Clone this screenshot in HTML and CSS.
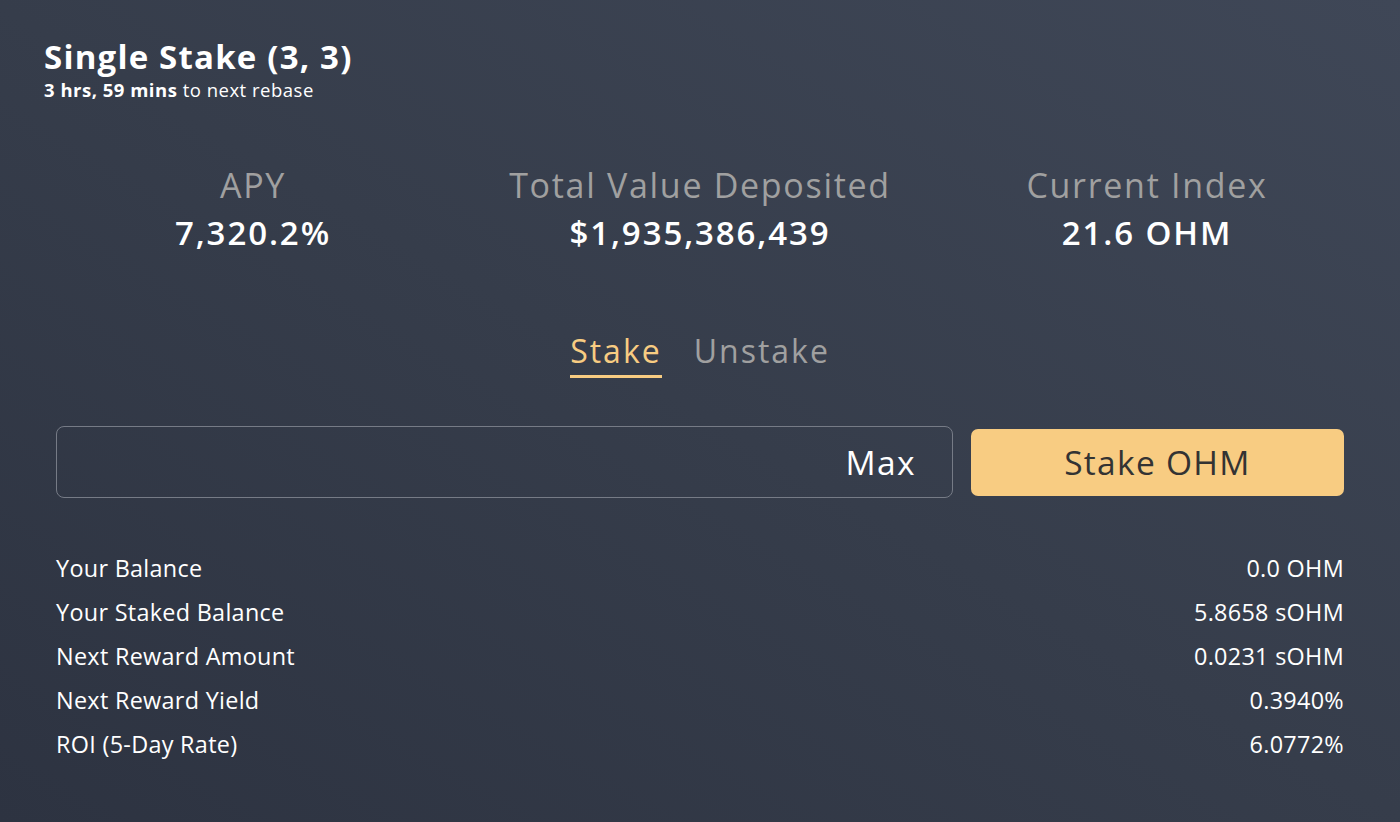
FILE: index.html
```html
<!DOCTYPE html>
<html lang="en">
<head>
    <meta charset="UTF-8">
    <meta name="viewport" content="width=device-width, initial-scale=1.0">
    <title>Single Stake</title>
    <link rel="stylesheet" href="styles.css">
</head>
<body>
    <div class="page">
        <div class="header">
            <h1>Single Stake (3, 3)</h1>
            <p class="rebase"><b>3 hrs, 59 mins</b> to next rebase</p>
        </div>

        <div class="metrics">
            <div class="metric">
                <div class="metric-label">APY</div>
                <div class="metric-value">7,320.2%</div>
            </div>
            <div class="metric">
                <div class="metric-label">Total Value Deposited</div>
                <div class="metric-value">$1,935,386,439</div>
            </div>
            <div class="metric">
                <div class="metric-label">Current Index</div>
                <div class="metric-value">21.6 OHM</div>
            </div>
        </div>

        <div class="tabs">
            <span class="tab active">Stake</span>
            <span class="tab">Unstake</span>
        </div>

        <div class="stake-row">
            <div class="amount-box">
                <input type="text" class="amount-input">
                <span class="max-btn">Max</span>
            </div>
            <button class="stake-btn">Stake OHM</button>
        </div>

        <div class="data-list">
            <div class="data-row"><span>Your Balance</span><span>0.0 OHM</span></div>
            <div class="data-row"><span>Your Staked Balance</span><span>5.8658 sOHM</span></div>
            <div class="data-row"><span>Next Reward Amount</span><span>0.0231 sOHM</span></div>
            <div class="data-row"><span>Next Reward Yield</span><span>0.3940%</span></div>
            <div class="data-row"><span>ROI (5-Day Rate)</span><span>6.0772%</span></div>
        </div>
    </div>
</body>
</html>
```

FILE: styles.css
```css
body {
    margin: 0;
    padding: 0;
    font-family: 'Open Sans', 'Lato', sans-serif;
    background: linear-gradient(30deg, #2d3341 0%, #363d4b 50%, #3f4757 100%);
    height: 100vh;
    color: #fff;
    overflow: hidden;
}

.page {
    padding: 34px 56px 0 56px;
}

.header {
    margin-left: -12px;
}

.header h1 {
    margin: 0;
    font-size: 33px;
    font-weight: 700;
    line-height: 46px;
    letter-spacing: 1.2px;
}

.rebase {
    margin: -1px 0 0;
    font-size: 18.5px;
    line-height: 22px;
    letter-spacing: 0.5px;
}

.rebase b {
    font-weight: 700;
}

.metrics {
    display: grid;
    grid-template-columns: repeat(3, 447px);
    justify-content: center;
    margin-top: 61px;
    text-align: center;
}

.metric-label {
    font-size: 34px;
    line-height: 46px;
    letter-spacing: 1.7px;
    color: #a0a0a0;
}

.metric-value {
    font-size: 33px;
    line-height: 49px;
    font-weight: 600;
    letter-spacing: 1.9px;
}

.tabs {
    display: flex;
    justify-content: center;
    gap: 32px;
    margin-top: 73px;
}

.tab {
    font-size: 32px;
    line-height: 42px;
    letter-spacing: 2px;
    color: #a0a0a0;
    padding-bottom: 3px;
    border-bottom: 3px solid transparent;
}

.tab.active {
    color: #f8cc82;
    border-bottom-color: #f8cc82;
}

.stake-row {
    display: flex;
    align-items: center;
    gap: 18px;
    margin-top: 48px;
}

.amount-box {
    flex: 1;
    display: flex;
    align-items: center;
    height: 70px;
    border: 1px solid #767b86;
    border-radius: 8px;
}

.amount-input {
    flex: 1;
    min-width: 0;
    background: transparent;
    border: none;
    outline: none;
    color: #fff;
    font-size: 28px;
    padding: 0 16px;
}

.max-btn {
    font-size: 33.5px;
    font-weight: 500;
    letter-spacing: 1.4px;
    padding-right: 36px;
}

.stake-btn {
    width: 373px;
    height: 67px;
    border: none;
    border-radius: 7px;
    background: #f8cc82;
    color: #333;
    font-family: inherit;
    font-size: 33.5px;
    font-weight: 500;
    letter-spacing: 1.3px;
    cursor: pointer;
}

.data-list {
    margin-top: 48px;
}

.data-row {
    display: flex;
    justify-content: space-between;
    font-size: 23.4px;
    font-weight: 500;
    line-height: 44px;
    letter-spacing: 0.3px;
}
```
